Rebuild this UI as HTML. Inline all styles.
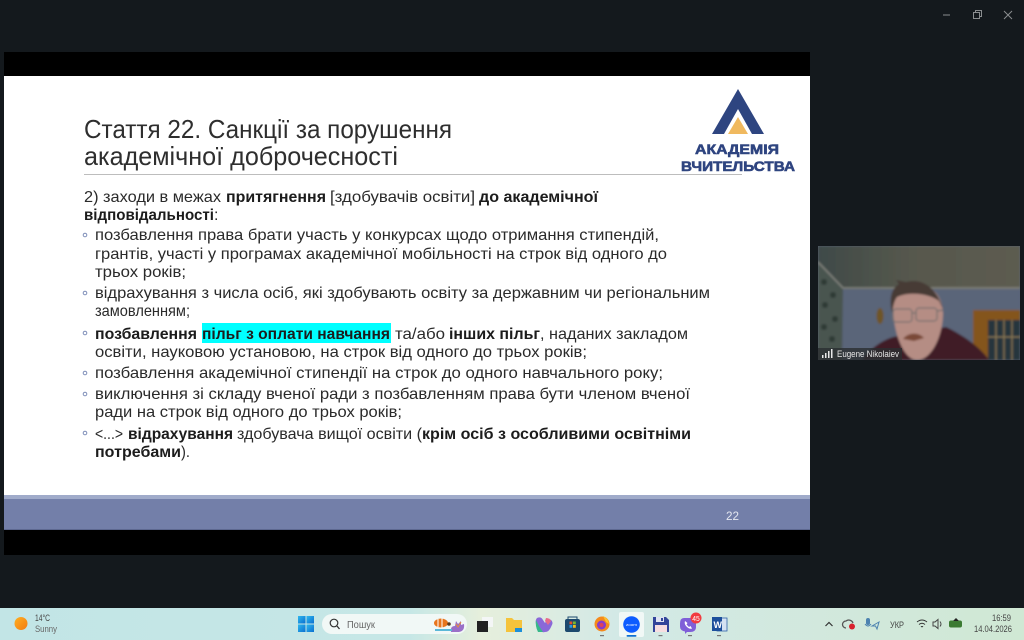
<!DOCTYPE html>
<html lang="uk">
<head>
<meta charset="utf-8">
<title>Стаття 22</title>
<style>
html,body{margin:0;padding:0;width:1024px;height:640px;overflow:hidden;background:#14191d}
svg{position:absolute;left:0;top:0;display:block}
text{font-family:"Liberation Sans","DejaVu Sans",sans-serif}
.b{font-size:16px;fill:#2b2b2b}
.s{font-weight:bold;fill:#1c1c1c}
.t{font-size:26px;fill:#2e2e2e}
.tb{font-size:9px;fill:#444}
</style>
</head>
<body>
<svg width="1024" height="640" viewBox="0 0 1024 640" xmlns="http://www.w3.org/2000/svg">
<defs>
<linearGradient id="bar" x1="0" x2="1" y1="0" y2="0">
<stop offset="0" stop-color="#c2e5e6"/><stop offset=".4" stop-color="#c6e7e6"/><stop offset=".47" stop-color="#e6efdc"/><stop offset=".6" stop-color="#d3e9e6"/><stop offset="1" stop-color="#d0e8d4"/>
</linearGradient>
<linearGradient id="ceil" x1="0" x2="1" y1="0" y2="0"><stop offset="0" stop-color="#3f4a48"/><stop offset=".5" stop-color="#58594e"/><stop offset="1" stop-color="#5c5b50"/></linearGradient>
<linearGradient id="sun" x1="0" x2="1" y1="0" y2="1"><stop offset="0" stop-color="#ffb01f"/><stop offset="1" stop-color="#f27a14"/></linearGradient>
<linearGradient id="win" x1="0" x2="1" y1="0" y2="1"><stop offset="0" stop-color="#30b8ee"/><stop offset="1" stop-color="#0a6fd0"/></linearGradient>
<filter id="soft" x="-5%" y="-5%" width="110%" height="110%"><feGaussianBlur stdDeviation="1"/></filter>
<filter id="soft2" x="-2%" y="-2%" width="104%" height="104%"><feGaussianBlur stdDeviation="0.35"/></filter>
</defs>

<!-- window -->
<rect width="1024" height="640" fill="#14191d"/>
<path d="M943 15h7" stroke="#8a8d8f" stroke-width="1"/>
<rect x="973.500" y="12.500" width="6" height="6" fill="none" stroke="#8a8d8f"/>
<path d="M975.500 12.500v-2h6v6h-2" fill="none" stroke="#8a8d8f"/>
<path d="M1004 11l8 8M1012 11l-8 8" stroke="#8a8d8f" stroke-width="1"/>

<!-- slide -->
<rect x="4" y="52" width="806" height="503" fill="#000"/>
<rect x="4" y="76" width="806" height="419" fill="#fff"/>
<rect x="4" y="495" width="806" height="4" fill="#a0abca"/>
<rect x="4" y="499" width="806" height="30" fill="#737fa9"/>
<rect x="4" y="529" width="806" height="1" fill="#5d6890"/>
<text x="726" y="520" font-size="12" fill="#e4e7f0" textLength="13" lengthAdjust="spacingAndGlyphs">22</text>

<!-- logo -->
<g filter="url(#soft2)">
<path d="M738 89L764 134H752L738 109L724 134H712Z" fill="#2f4480"/>
<path d="M738 117L748 134H728Z" fill="#f0b95f"/>
<text x="695" y="154" font-size="14" font-weight="bold" fill="#2f4480" textLength="84" lengthAdjust="spacingAndGlyphs" stroke="#2f4480" stroke-width=".6">АКАДЕМІЯ</text>
<text x="681" y="171" font-size="14" font-weight="bold" fill="#2f4480" textLength="114" lengthAdjust="spacingAndGlyphs" stroke="#2f4480" stroke-width=".6">ВЧИТЕЛЬСТВА</text>
</g>

<g filter="url(#soft2)">
<!-- title -->
<text class="t" x="84" y="138" textLength="368" lengthAdjust="spacingAndGlyphs">Стаття 22. Санкції за порушення</text>
<text class="t" x="84" y="165" textLength="314" lengthAdjust="spacingAndGlyphs">академічної доброчесності</text>
<rect x="84" y="174" width="658" height="1" fill="#bdbdbd"/>

<!-- body -->
<text class="b" x="84" y="202" textLength="137" lengthAdjust="spacingAndGlyphs">2) заходи в межах</text>
<text class="b s" x="226" y="202" textLength="100" lengthAdjust="spacingAndGlyphs">притягнення</text>
<text class="b" x="330" y="202" textLength="145" lengthAdjust="spacingAndGlyphs">[здобувачів освіти]</text>
<text class="b s" x="479" y="202" textLength="119" lengthAdjust="spacingAndGlyphs">до академічної</text>
<text class="b s" x="84" y="220" textLength="130" lengthAdjust="spacingAndGlyphs">відповідальності</text>
<text class="b" x="214" y="220">:</text>

<text class="b" x="95" y="240" textLength="564" lengthAdjust="spacingAndGlyphs">позбавлення права брати участь у конкурсах щодо отримання стипендій,</text>
<text class="b" x="95" y="259" textLength="572" lengthAdjust="spacingAndGlyphs">грантів, участі у програмах академічної мобільності на строк від одного до</text>
<text class="b" x="95" y="277" textLength="91" lengthAdjust="spacingAndGlyphs">трьох років;</text>
<text class="b" x="95" y="298" textLength="615" lengthAdjust="spacingAndGlyphs">відрахування з числа осіб, які здобувають освіту за державним чи регіональним</text>
<text class="b" x="95" y="316" textLength="95" lengthAdjust="spacingAndGlyphs">замовленням;</text>

<rect x="202" y="323" width="189" height="20" fill="#00ffff"/>
<text class="b s" x="95" y="339" textLength="102" lengthAdjust="spacingAndGlyphs">позбавлення</text>
<text class="b s" x="202" y="339" textLength="188" lengthAdjust="spacingAndGlyphs">пільг з оплати навчання</text>
<text class="b" x="395" y="339" textLength="50" lengthAdjust="spacingAndGlyphs">та/або</text>
<text class="b s" x="449" y="339" textLength="91" lengthAdjust="spacingAndGlyphs">інших пільг</text>
<text class="b" x="540" y="339" textLength="148" lengthAdjust="spacingAndGlyphs">, наданих закладом</text>
<text class="b" x="95" y="357" textLength="492" lengthAdjust="spacingAndGlyphs">освіти, науковою установою, на строк від одного до трьох років;</text>
<text class="b" x="95" y="378" textLength="568" lengthAdjust="spacingAndGlyphs">позбавлення академічної стипендії на строк до одного навчального року;</text>
<text class="b" x="95" y="399" textLength="595" lengthAdjust="spacingAndGlyphs">виключення зі складу вченої ради з позбавленням права бути членом вченої</text>
<text class="b" x="95" y="417" textLength="307" lengthAdjust="spacingAndGlyphs">ради на строк від одного до трьох років;</text>
<text class="b" x="95" y="439" textLength="28" lengthAdjust="spacingAndGlyphs">&lt;...&gt;</text>
<text class="b s" x="128" y="439" textLength="105" lengthAdjust="spacingAndGlyphs">відрахування</text>
<text class="b" x="237" y="439" textLength="185" lengthAdjust="spacingAndGlyphs">здобувача вищої освіти (</text>
<text class="b s" x="422" y="439" textLength="269" lengthAdjust="spacingAndGlyphs">крім осіб з особливими освітніми</text>
<text class="b s" x="95" y="457" textLength="86" lengthAdjust="spacingAndGlyphs">потребами</text>
<text class="b" x="181" y="457" textLength="9" lengthAdjust="spacingAndGlyphs">).</text>
<g fill="none" stroke="#7d8db8" stroke-width="1">
<circle cx="85" cy="235" r="1.800"/><circle cx="85" cy="293" r="1.800"/><circle cx="85" cy="333" r="1.800"/><circle cx="85" cy="373" r="1.800"/><circle cx="85" cy="394" r="1.800"/><circle cx="85" cy="433" r="1.800"/>
</g>
</g>

<!-- video -->
<svg x="818" y="246" width="202" height="114" viewBox="0 -1 202 114">
<rect y="-1" width="202" height="114" fill="#596474"/>
<g filter="url(#soft)">
<rect y="-1" width="202" height="44" fill="url(#ceil)"/>
<path d="M25 42H202V113H0V16Z" fill="#5a6579"/>
<path d="M0 15L25 42L24 113H0Z" fill="#4a5450"/>
<g fill="#2f3a36"><circle cx="6" cy="35" r="3"/><circle cx="15" cy="48" r="3"/><circle cx="7" cy="58" r="3"/><circle cx="17" cy="72" r="3"/><circle cx="6" cy="80" r="3"/><circle cx="14" cy="92" r="3"/></g>
<path d="M0 15L25 41H202" fill="none" stroke="#84857f" stroke-width="1.500"/>
<path d="M155 113V63H202V113Z" fill="#84551f"/>
<rect x="170" y="73" width="32" height="40" fill="#28343c"/>
<path d="M178 73v40M186 73v40M194 73v40M170 90h32" stroke="#8d7a55" stroke-width="1.200"/>
<ellipse cx="62" cy="69" rx="3.500" ry="8" fill="#6e5426"/>
<path d="M44 113C50 104 62 94 75 90L128 80C145 88 162 100 171 113Z" fill="#3f1d28"/>
<path d="M75 62C75 46 86 38 100 38C114 38 124 48 125 66C125 88 114 113 99 113C86 113 76 88 75 62Z" fill="#b58d84"/>
<path d="M74 66C71 52 73 42 81 37L78 33L88 35C102 31 118 38 125 62L121 54C112 47 92 44 79 50C76 54 75 60 74 66Z" fill="#463a35"/>
<path d="M85 92C90 85 101 85 106 91L96 94Z" fill="#7a4a38"/>
<g fill="none" stroke="#74706e" stroke-width="1.200"><rect x="75" y="62" width="19" height="13" rx="3"/><rect x="98" y="61" width="21" height="13" rx="3"/><path d="M94 66h4M119 64l6-1"/></g>
</g>
<rect x="0" y="101" width="84" height="12" fill="#2b2e31" opacity=".8"/>
<g fill="#e8e8e8"><rect x="4" y="108" width="1.500" height="3"/><rect x="7" y="106" width="1.500" height="5"/><rect x="10" y="104" width="1.500" height="7"/><rect x="13" y="102" width="1.500" height="9"/></g>
<text x="19" y="110" font-size="9.500" fill="#e6e6e6" textLength="62" lengthAdjust="spacingAndGlyphs">Eugene Nikolaiev</text>
</svg>

<!-- taskbar -->
<rect x="0" y="608" width="1024" height="32" fill="url(#bar)"/>
<g filter="url(#soft2)">
<circle cx="21" cy="623.500" r="6.500" fill="url(#sun)"/>
<text class="tb" x="35" y="621" textLength="15" lengthAdjust="spacingAndGlyphs">14°C</text>
<text x="35" y="632" font-size="9" fill="#666" textLength="22" lengthAdjust="spacingAndGlyphs">Sunny</text>

<g fill="url(#win)"><rect x="298" y="616" width="7.500" height="7.500"/><rect x="306.500" y="616" width="7.500" height="7.500"/><rect x="298" y="624.500" width="7.500" height="7.500"/><rect x="306.500" y="624.500" width="7.500" height="7.500"/></g>
<rect x="322" y="614" width="145" height="20" rx="10" fill="#f1f8f6"/>
<circle cx="334" cy="623" r="3.800" fill="none" stroke="#333" stroke-width="1.200"/><path d="M337 626l2.500 3" stroke="#333" stroke-width="1.300"/>
<text x="347" y="628" font-size="10" fill="#666" textLength="28" lengthAdjust="spacingAndGlyphs">Пошук</text>
<ellipse cx="441" cy="623" rx="7" ry="4.500" fill="#e8741e"/><path d="M438 619v8M442 618.500v9" stroke="#fff" stroke-width="1"/><circle cx="449" cy="624" r="1.800" fill="#5a3a20"/>
<path d="M451 632q-1-6 4-6l1-5 2 3 3-3 0 4 3-1q1 7-5 8Z" fill="#9a70c8"/><path d="M456 624l2 3 3-5" stroke="#e8903a" fill="none"/><path d="M435 630h17" stroke="#5ab8d8" stroke-width="2"/>

<!-- task view -->
<rect x="482" y="617" width="11" height="10" fill="#f4f6f6"/><rect x="477" y="621" width="11" height="11" fill="#222"/>
<!-- explorer -->
<path d="M506 618h6l2 2h8v12h-16Z" fill="#f5c33b"/><rect x="515" y="628" width="7" height="4" fill="#1a8fd8"/>
<!-- copilot -->
<path d="M537 618q4-2 6 2l2 3q3-5 6-3q3 2 0 7q-2 5-6 5q-4 1-6-3l-3-5q-1-4 1-6Z" fill="#8a68d8"/><path d="M536 620l3 6 4 6-5 0q-3-6-2-12Z" fill="#38b88a"/><path d="M546 618q4 0 5 3l-3 4-3-4Z" fill="#e86a8a"/>
<!-- store -->
<rect x="565" y="619" width="15" height="13" rx="2" fill="#1c4a6e"/><path d="M568 619v-2h9v2" fill="none" stroke="#1c4a6e"/><rect x="569.500" y="621.500" width="2.800" height="2.800" fill="#e8502a"/><rect x="573" y="621.500" width="2.800" height="2.800" fill="#7ab82a"/><rect x="569.500" y="625" width="2.800" height="2.800" fill="#2a9ae0"/><rect x="573" y="625" width="2.800" height="2.800" fill="#f4b81e"/>
<!-- firefox -->
<circle cx="602" cy="624" r="7.500" fill="#f58a1f"/><circle cx="601.500" cy="625" r="4.500" fill="#8a3ac8"/><path d="M603 616q6 3 6 8l-3-2Z" fill="#fcc02a"/><circle cx="601.500" cy="625" r="2" fill="#e0405a"/>
<rect x="600" y="635" width="4" height="1.200" fill="#777"/>
<!-- zoom -->
<rect x="619" y="612" width="25" height="25" rx="2" fill="#f1f8f6"/>
<circle cx="631.500" cy="624.500" r="8.300" fill="#0b5cff"/>
<text x="626" y="626" font-size="3.800" fill="#fff" textLength="11" lengthAdjust="spacingAndGlyphs">zoom</text>
<rect x="626.500" y="635" width="10" height="1.800" rx=".9" fill="#1170d0"/>
<!-- floppy -->
<path d="M653 617h13l3 3v12h-16Z" fill="#33449a"/><rect x="655" y="625" width="12" height="7" fill="#f6dde0"/><rect x="656" y="617" width="8" height="5" fill="#dfe3f2"/><rect x="661" y="618" width="2" height="3" fill="#33449a"/>
<rect x="658.500" y="635" width="4" height="1.200" fill="#777"/>
<!-- viber -->
<path d="M684 618h6q6 0 6 6v3q0 5-6 5h-3l-2 2v-2.500q-5-1-5-5v-3q0-5.500 4-5.500Z" fill="#7f5fd8"/><path d="M685 621q-1 3 1.500 5.500q3 3 5.500 2l-1.500-2.500-1.500 1-2.500-2.500 1-1.500Z" fill="#fff"/>
<circle cx="696" cy="618" r="5.500" fill="#f23b3f"/><text x="692.300" y="621" font-size="7.500" fill="#fff" textLength="7.500" lengthAdjust="spacingAndGlyphs">45</text>
<rect x="688" y="635" width="4" height="1.200" fill="#777"/>
<!-- word -->
<rect x="717" y="618" width="10" height="13" fill="#d5e2f2" stroke="#2f62a8" stroke-width=".8"/><rect x="712" y="617" width="10" height="14" fill="#1f4f9c"/><text x="713.500" y="628" font-size="9" font-weight="bold" fill="#fff">W</text>
<rect x="717" y="635" width="4" height="1.200" fill="#777"/>

<!-- tray -->
<path d="M825.500 626l3.500-3.500 3.500 3.500" fill="none" stroke="#333" stroke-width="1.200"/>
<path d="M846 628a3.500 3.500 0 0 1 0-7a4.500 4.500 0 0 1 7 2" fill="none" stroke="#555" stroke-width="1.300"/><circle cx="852" cy="626.500" r="3" fill="#d8222e"/>
<rect x="866" y="618" width="4" height="7" rx="2" fill="#4d82b0"/><path d="M865 624q3 4 6 0" stroke="#4d82b0" fill="none"/><path d="M872 626l7-4-2 7-1.500-3Z" fill="none" stroke="#4d82b0"/>
<text x="890" y="628" font-size="9" fill="#444" textLength="14" lengthAdjust="spacingAndGlyphs">УКР</text>
<g fill="none" stroke="#333" stroke-width="1"><path d="M917 622q5-4 10 0M919 624.500q3-2.500 6 0M921 627q1-1 2 0"/></g>
<path d="M933 622h2l3-2.500v9l-3-2.500h-2Z" fill="none" stroke="#444"/><path d="M940 621.500q2 2.500 0 5" fill="none" stroke="#444"/>
<rect x="949" y="620.500" width="13" height="7" rx="2" fill="#3a7a30"/><path d="M953 621l3-3 3 3" fill="#222"/>
<text x="992" y="621" font-size="9.500" fill="#444" textLength="19" lengthAdjust="spacingAndGlyphs">16:59</text>
<text x="974" y="632" font-size="9.500" fill="#444" textLength="38" lengthAdjust="spacingAndGlyphs">14.04.2026</text>
</g>
</svg>
</body>
</html>
